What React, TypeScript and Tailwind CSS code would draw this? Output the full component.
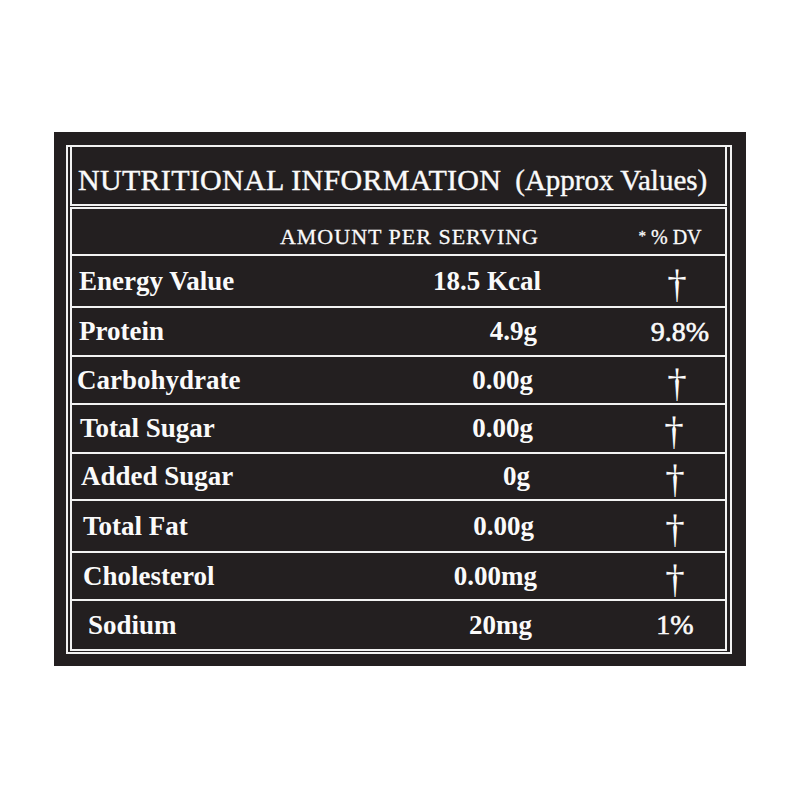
import React from "react";

type Row = {
    label: string;
    value: string;
    dv: string;
    h: string;
    pl: string;
    pr: string;
    dvShift: string;
};

const rows: Row[] = [
    { label: "Energy Value", value: "18.5 Kcal", dv: "†", h: "h-[52px]", pl: "pl-[7px]", pr: "pr-[0px]", dvShift: "pl-[0px]" },
    { label: "Protein", value: "4.9g", dv: "9.8%", h: "h-[49px]", pl: "pl-[7px]", pr: "pr-[4px]", dvShift: "pl-[6px]" },
    { label: "Carbohydrate", value: "0.00g", dv: "†", h: "h-[48px]", pl: "pl-[5px]", pr: "pr-[8px]", dvShift: "pl-[0px]" },
    { label: "Total Sugar", value: "0.00g", dv: "†", h: "h-[49px]", pl: "pl-[8px]", pr: "pr-[8px]", dvShift: "pr-[6px]" },
    { label: "Added Sugar", value: "0g", dv: "†", h: "h-[47px]", pl: "pl-[9px]", pr: "pr-[11px]", dvShift: "pr-[4px]" },
    { label: "Total Fat", value: "0.00g", dv: "†", h: "h-[52px]", pl: "pl-[11px]", pr: "pr-[7px]", dvShift: "pr-[4px]" },
    { label: "Cholesterol", value: "0.00mg", dv: "†", h: "h-[48px]", pl: "pl-[11px]", pr: "pr-[4px]", dvShift: "pr-[4px]" },
    { label: "Sodium", value: "20mg", dv: "1%", h: "h-[48px]", pl: "pl-[16px]", pr: "pr-[9px]", dvShift: "pr-[4px]" },
];

export default function App() {
    return (
        <div
            className="w-[800px] h-[800px] bg-white pt-[132px] pl-[54px] text-[#fafafa]"
            style={{ fontFamily: '"Liberation Serif", "Times New Roman", serif' }}
        >
            {/* ---- DARK PANEL ---- */}
            <div className="w-[692px] h-[534px] bg-[#231f20] pt-[13px] pl-[12px]">

                {/* ---- OUTER FRAME ---- */}
                <div className="w-[666px] h-[509px] border-2 border-[#f2f2f2] pl-[2px] pr-[3px]">

                    {/* TITLE */}
                    <div className="h-[59px] border-x-2 border-b-2 border-[#f2f2f2] flex items-center pl-[6px] pt-[9px] leading-none whitespace-pre [-webkit-text-stroke:0.4px_#fafafa]">
                        <span className="text-[30px] tracking-[0.3px]">NUTRITIONAL INFORMATION</span>
                        <span className="text-[29px] pl-[14px]">(Approx Values)</span>
                    </div>

                    {/* TABLE */}
                    <div className="mt-[1px] border-2 border-[#f2f2f2]">

                        {/* HEADER */}
                        <div className="h-[47px] border-b-2 border-[#f2f2f2] flex items-center pt-[10px] [-webkit-text-stroke:0.3px_#fafafa]">
                            <div className="w-[467px] text-right text-[22px] tracking-[1px] leading-none whitespace-nowrap">
                                AMOUNT PER SERVING
                            </div>
                            <div className="ml-[93px] w-[90px] flex justify-center pr-[14px] text-[20px] leading-none whitespace-pre">
                                <span><span className="text-[15px] align-[3px]">*</span> % DV</span>
                            </div>
                        </div>

                        {rows.map((row, i) => (
                            <div
                                key={row.label}
                                className={`${row.h} flex items-center ${i === rows.length - 1 ? "" : "border-b-2 border-[#f2f2f2]"}`}
                            >
                                <div className={`w-[300px] ${row.pl} text-[27px] leading-none font-bold`}>
                                    {row.label}
                                </div>
                                <div className={`w-[169px] text-right ${row.pr} text-[27px] leading-none font-bold`}>
                                    {row.value}
                                </div>
                                <div className={`ml-[91px] w-[90px] flex justify-center ${row.dvShift}`}>
                                    {row.dv === "†" ? (
                                        <span className="text-[39px] leading-none font-normal pt-[4px]">†</span>
                                    ) : (
                                        <span className="text-[28px] leading-none font-normal [-webkit-text-stroke:0.6px_#fafafa]">{row.dv}</span>
                                    )}
                                </div>
                            </div>
                        ))}
                    </div>
                </div>
            </div>
        </div>
    );
}
